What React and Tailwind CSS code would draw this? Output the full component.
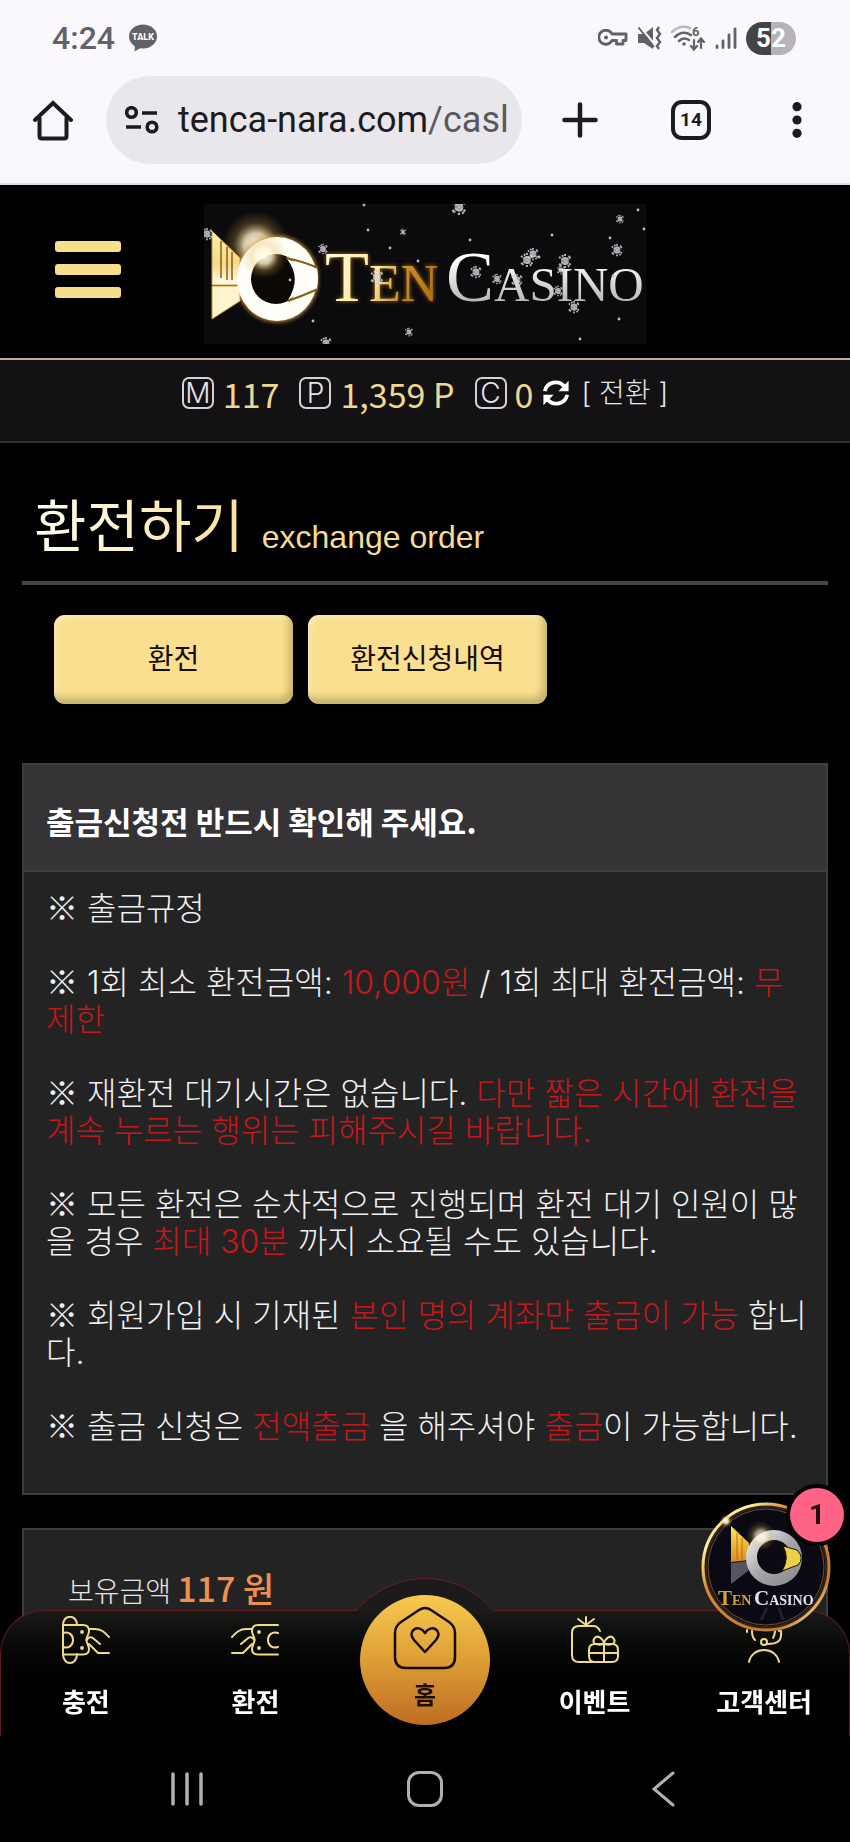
import React from "react";

const INK = "#1d1b20";
const GOLD = "#efdb8c";

function StatusBar() {
  return (
    <div className="flex h-[76px] items-center justify-between pr-[54px] pl-[52px] text-[#636165]">
      <div className="flex items-center gap-[14px]">
        <span className="text-[32px] leading-none font-medium">4:24</span>
        <svg width="28" height="28" viewBox="0 0 28 28" role="img" aria-label="TALK">
          <ellipse cx="14" cy="12.500" rx="14" ry="12" fill="currentColor" />
          <path d="M6 20 L5.500 27.500 L15 22 Z" fill="currentColor" />
          <text x="14" y="16" textAnchor="middle" fontSize="9" fontWeight="800" fontFamily="Roboto, sans-serif" fill="#fff">TALK</text>
        </svg>
      </div>
      <div className="flex items-center gap-[9px]">
        <svg width="30" height="18" viewBox="0 0 30 18" fill="none" stroke="currentColor" strokeWidth="2.800">
          <path d="M14 5 H28 V11.500 H25 V15 H18.500 V11.500 H14 A7 7 0 1 1 14 5 Z" strokeLinejoin="round" />
          <circle cx="8" cy="8.500" r="2" fill="currentColor" stroke="none" />
        </svg>
        <svg width="25" height="24" viewBox="0 0 25 24" fill="none" stroke="currentColor">
          <path d="M1 8 H7 L16 1 V23 L7 17 H1 Z" fill="currentColor" stroke="none" />
          <path d="M3.500 1 L18 19" stroke="#faf7fd" strokeWidth="2" />
          <path d="M1.500 1.500 L17 21" strokeWidth="2" />
          <path d="M22 1 l-2 3 3 4 -3 4 3 4 -3 4 2 3" strokeWidth="2.400" />
        </svg>
        <svg width="35" height="32" viewBox="0 -3 35 32" fill="none" stroke="currentColor" strokeLinecap="round">
          <path d="M1 7 C7 1 14 1 19 3" stroke="#b9b7bb" strokeWidth="2.500" />
          <path d="M4 12 C9 7 15 7 20 10 M8 16 C11 13 15 13 18 15" strokeWidth="2.500" />
          <circle cx="13" cy="19" r="1.800" fill="currentColor" stroke="none" />
          <path d="M23 15 V24 M20 21 L23 24.500 L26 21 M30 23 V14 M27 17 L30 13.500 L33 17" strokeWidth="2.200" />
          <text x="21" y="11" fontSize="13" fontWeight="700" fontFamily="Roboto, sans-serif" fill="currentColor" stroke="none">6</text>
        </svg>
        <svg width="22" height="22" viewBox="0 0 22 22" fill="none" stroke="currentColor" strokeWidth="2.800" strokeLinecap="round">
          <path d="M2 19 V20.500 M8 14 V20.500 M14 8 V20.500 M20 2 V20.500" />
        </svg>
        <span className="flex h-[33px] w-[50px] items-center justify-center rounded-full bg-linear-to-r from-[#454346] from-50% to-[#b6b4b8] to-50% text-[26px] leading-none font-bold text-white">
          52
        </span>
      </div>
    </div>
  );
}

function AddressBar() {
  return (
    <div className="flex items-center pb-[19px]">
      <button aria-label="Home" className="flex w-[106px] justify-center">
        <svg width="40" height="42" viewBox="0 0 40 42" fill="none" stroke={INK} strokeWidth="4" strokeLinecap="round" strokeLinejoin="round">
          <path d="M2 21 L20 4 L38 21" strokeLinejoin="miter" />
          <path d="M6.500 19 V37 Q6.500 39.500 9 39.500 H31 Q33.500 39.500 33.500 37 V19" />
        </svg>
      </button>
      <button className="flex h-[88px] min-w-0 flex-1 items-center gap-[19px] overflow-hidden rounded-full bg-[#e9e7ec] pl-[19px] text-[36px] whitespace-nowrap text-[#1d1b20]">
        <svg className="shrink-0" width="34" height="28" viewBox="0 0 34 28" fill="none" stroke={INK} strokeWidth="3.600">
          <circle cx="6.500" cy="6.500" r="4.800" />
          <path d="M17 7 H32 M1 21 H16" />
          <circle cx="27" cy="21" r="4.800" />
        </svg>
        <span>tenca-nara.com<span className="text-[#5a585d]">/casl</span></span>
      </button>
      <button aria-label="New tab" className="flex w-[116px] justify-center">
        <svg width="36" height="36" viewBox="0 0 36 36" stroke={INK} strokeWidth="4.500" strokeLinecap="round">
          <path d="M18 2.500 V33.500 M2.500 18 H33.500" />
        </svg>
      </button>
      <button aria-label="Tabs" className="flex w-[106px] justify-center">
        <span className="flex h-[40px] w-[40px] items-center justify-center rounded-[11px] border-4 border-[#1d1b20] text-[19px] font-bold text-[#1d1b20]">14</span>
      </button>
      <button aria-label="Menu" className="flex w-[106px] justify-center">
        <svg width="10" height="36" viewBox="0 0 10 36" fill={INK}>
          <circle cx="5" cy="4.700" r="4.600" />
          <circle cx="5" cy="18" r="4.600" />
          <circle cx="5" cy="31.300" r="4.600" />
        </svg>
      </button>
    </div>
  );
}

const FLAKES = [
  [3, 30, 7], [119, 45, 6], [173, 73, 8], [199, 28, 4], [122, 139, 7], [205, 128, 5],
  [255, 3, 9], [272, 68, 7], [293, 75, 6], [313, 76, 7], [323, 56, 8], [329, 50, 7],
  [361, 57, 8], [357, 66, 5], [354, 87, 6], [370, 103, 7], [413, 46, 7], [416, 15, 5],
];
const DOTS = [
  [160, 1], [164, 26], [186, 44], [214, 57], [109, 117], [86, 76], [266, 36], [348, 31],
  [335, 53], [434, 6], [440, 25], [406, 34], [409, 72], [415, 115], [376, 135],
];

function Flake({ x, y, r }) {
  return (
    <g transform={`translate(${x} ${y}) scale(${r / 8})`} stroke="#d0d0d4" strokeWidth="2" strokeDasharray="2 1" opacity="0.850">
      <path d="M0 -7 V7 M-6 -4 L6 4 M-6 4 L6 -4 M-3 -6 L4 6 M5 -5 L-5 5" />
      <circle r="4" fill="#d9d9dc" fillOpacity="0.700" stroke="none" />
    </g>
  );
}

function Logo() {
  return (
    <svg className="h-auto w-[442px]" viewBox="0 0 442 140" role="img" aria-label="Ten Casino">
      <defs>
        <linearGradient id="ten" gradientUnits="userSpaceOnUse" x1="120" x2="236" y1="50" y2="90">
          <stop offset="0" stopColor="#fffbe0" />
          <stop offset="0.450" stopColor="#ffe9a0" />
          <stop offset="0.700" stopColor="#c98a2b" />
          <stop offset="1" stopColor="#b06c0c" />
        </linearGradient>
        <linearGradient id="casino" x1="0" x2="0" y1="0" y2="1">
          <stop offset="0.300" stopColor="#ffffff" />
          <stop offset="1" stopColor="#9d9da2" />
        </linearGradient>
        <linearGradient id="wing" x1="0" x2="0" y1="0" y2="1">
          <stop offset="0" stopColor="#fff3a8" />
          <stop offset="0.600" stopColor="#f5d988" />
          <stop offset="1" stopColor="#fffdf0" />
        </linearGradient>
        <radialGradient id="flare">
          <stop offset="0" stopColor="#fffef8" />
          <stop offset="0.350" stopColor="#fff6d0" stopOpacity="0.800" />
          <stop offset="0.650" stopColor="#e0b860" stopOpacity="0.250" />
          <stop offset="1" stopColor="#d9962a" stopOpacity="0" />
        </radialGradient>
        <filter id="glow" x="-30%" y="-30%" width="160%" height="160%">
          <feGaussianBlur stdDeviation="2" />
        </filter>
      </defs>
      <rect width="442" height="140" fill="#0b0a0d" />
      <circle cx="52" cy="41" r="34" fill="url(#flare)" />
      <ellipse cx="73" cy="75" rx="41" ry="43" fill="#d0953a" filter="url(#glow)" />
      <path d="M8 27 L36 54 V81 H8 Z" fill="url(#wing)" stroke="#c99a3c" strokeWidth="1" />
      <path d="M8 82 H36 V97 L8 115 Z" fill="#fdf3cf" stroke="#c99a3c" strokeWidth="1" />
      <path d="M17 37 V74 M23 43 V76 M28 48 V76" stroke="#8a5f14" strokeWidth="1.500" />
      <ellipse cx="73" cy="75" rx="40" ry="42" fill="#fffef8" />
      <circle cx="72" cy="75" r="25" fill="#0c0905" />
      <path d="M83 55 Q98 74 84 96 Q100 86 113 85 Q115 74 113 64 Q98 61 83 55 Z" fill="#fffef8" />
      <path d="M82 54 Q98 57 114 64 M84 97 Q98 92 114 85" fill="none" stroke="#8a5a16" strokeWidth="2" />
      <circle cx="60" cy="52" r="23" fill="url(#flare)" />
      <g fontFamily="'Liberation Serif', serif" fontSize="72">
        <g fill="#b57a1e" filter="url(#glow)" aria-hidden="true">
          <text x="121" y="97">T<tspan fontSize="52">EN</tspan></text>
        </g>
        <text x="121" y="97" fill="url(#ten)">T<tspan fontSize="52">EN</tspan></text>
        <text x="242" y="97" fill="url(#casino)">C<tspan fontSize="49">ASINO</tspan></text>
      </g>
      {FLAKES.map(([x, y, r]) => <Flake key={`${x}-${y}`} x={x} y={y} r={r} />)}
      {DOTS.map(([x, y]) => <circle key={`${x}-${y}`} cx={x} cy={y} r="1.400" fill="#bdbdc2" />)}
    </svg>
  );
}

function SiteHeader() {
  return (
    <header>
      <div className="relative flex h-[173px] items-end justify-center pb-[14px]">
        <button aria-label="메뉴" className="absolute top-[56px] left-[55px] flex w-[66px] flex-col gap-[12px]">
          <span className="h-[11px] rounded-[3px] bg-[#f6de8a]" />
          <span className="h-[11px] rounded-[3px] bg-[#f6de8a]" />
          <span className="h-[11px] rounded-[3px] bg-[#f6de8a]" />
        </button>
        <Logo />
      </div>
      <div className="flex h-[85px] items-center justify-center border-t-2 border-b-2 border-t-[#c5a99a] border-b-[#343335] bg-[#131114] pb-[15px] whitespace-nowrap text-[34px] text-[#ecd98f]">
        <Badge letter="M" />
        <span className="mr-[20px] ml-[9px]">117</span>
        <Badge letter="P" />
        <span className="mr-[20px] ml-[9px]">1,359 P</span>
        <Badge letter="C" />
        <span className="ml-[8px]">0</span>
        <svg className="ml-[9px]" width="28" height="28" viewBox="0 0 30 30" fill="none" stroke="#fff" strokeWidth="4">
          <path d="M3 13 A12 12 0 0 1 24 8" />
          <path d="M27 17 A12 12 0 0 1 6 22" />
          <path d="M28.500 2 V13 H17.500 Z M1.500 28 V17 H12.500 Z" fill="#fff" stroke="none" />
        </svg>
        <button className="ml-[11px] font-['Inter','Noto_Sans_CJK_KR',sans-serif] text-[28px] font-light text-[#e6e5e8]">[ 전환 ]</button>
      </div>
    </header>
  );
}

function Badge({ letter }) {
  return (
    <span className="flex h-[32px] w-[32px] items-center justify-center rounded-[7px] border-2 border-[#d4d2d6] font-['Inter','Noto_Sans_CJK_KR',sans-serif] text-[28px] leading-none font-light text-[#e6e4e8]">
      {letter}
    </span>
  );
}

const goldButton =
  "h-[89px] w-[239px] rounded-[11px] bg-[#f9df8f] pb-[6px] text-[28px] text-[#140c06] shadow-[inset_-4px_-6px_7px_rgba(120,110,50,0.4),inset_3px_3px_5px_rgba(255,240,200,0.6)]";

function Red({ children }) {
  return <span className="text-[#c4181b]">{children}</span>;
}

function Mark() {
  return <span className="font-['Noto_Sans_CJK_KR',sans-serif] leading-none">※</span>;
}

function Notice() {
  return (
    <section className="border-2 border-[#3d3c3e] bg-[#242324]">
      <h2 className="flex h-[107px] items-center border-b-2 border-[#3f3e41] bg-[#353336] px-[22px] pt-[7px] text-[31px] font-bold text-white">
        출금신청전 반드시 확인해 주세요.
      </h2>
      <div className="flex flex-col gap-[37px] px-[22px] pt-[18px] pb-[48px] font-['Inter','Noto_Sans_CJK_KR',sans-serif] text-[32px] leading-[37px] font-light whitespace-nowrap text-[#f1f0f2]">
        <p><Mark /> 출금규정</p>
        <p><Mark /> 1회 최소 환전금액: <Red>10,000원</Red> / 1회 최대 환전금액: <Red>무<br />제한</Red></p>
        <p><Mark /> 재환전 대기시간은 없습니다. <Red>다만 짧은 시간에 환전을<br />계속 누르는 행위는 피해주시길 바랍니다.</Red></p>
        <p><Mark /> 모든 환전은 순차적으로 진행되며 환전 대기 인원이 많<br />을 경우 <Red>최대 30분</Red> 까지 소요될 수도 있습니다.</p>
        <p><Mark /> 회원가입 시 기재된 <Red>본인 명의 계좌만 출금이 가능</Red> 합니<br />다.</p>
        <p><Mark /> 출금 신청은 <Red>전액출금</Red> 을 해주셔야 <Red>출금</Red>이 가능합니다.</p>
      </div>
    </section>
  );
}

function NavIcon({ children }) {
  return (
    <svg width="48" height="48" viewBox="0 0 48 48" fill="none" stroke={GOLD} strokeWidth="2" strokeLinecap="round" strokeLinejoin="round">
      {children}
    </svg>
  );
}

function NavItem({ label, icon }) {
  return (
    <a href="#" className="flex flex-1 flex-col items-center gap-[18px] pt-[5px] text-[26px] leading-[38px] font-bold text-white">
      {icon}
      <span>{label}</span>
    </a>
  );
}

function BottomNav() {
  return (
    <nav className="relative flex h-[126px] rounded-t-[44px] border border-b-0 border-[#5e1c21] bg-linear-to-b from-[#191a18] to-black to-80%">
      <div className="absolute -top-[33px] left-1/2 h-[33px] w-[150px] -translate-x-1/2 overflow-hidden">
        <div className="-ml-[15px] h-[180px] w-[180px] rounded-full border border-[#6b1f25] bg-[#1b1b1b]" />
      </div>
      <div className="absolute -top-px left-1/2 h-[4px] w-[136px] -translate-x-1/2 bg-[#1a1b19]" />
      <NavItem
        label="충전"
        icon={
          <NavIcon>
            <path d="M1 9 V38 M1 9 C1 -2 15 -2 15 9 M1 38 C1 50 15 50 15 38" />
            <path d="M1 9 H21 Q27 9 27 15 C27 19 24.500 20 24.500 24 C24.500 28 27 29 27 33 Q27 38.500 21 38.500 H1" />
            <path d="M1 17 C7 15 11 19 11 24 C11 29 7 33 1 31" />
            <path d="M27 13 H33 C40 13 43 17 47 21 M38 28 L32 23 Q28 19 24.500 24 M47 37 H36 Q33 34 27 28" />
            <circle cx="20" cy="16" r="1.900" fill={GOLD} stroke="none" />
            <circle cx="20" cy="32" r="1.900" fill={GOLD} stroke="none" />
          </NavIcon>
        }
      />
      <NavItem
        label="환전"
        icon={
          <NavIcon>
            <path d="M47 9 H27 Q21 9 21 15 C21 19 23.500 20 23.500 24 C23.500 28 21 29 21 33 Q21 38.500 27 38.500 H47" />
            <path d="M47 17 C41 15 37 19 37 24 C37 29 41 33 47 31" />
            <path d="M21 13 H15 C8 13 5 17 1 21 M10 28 L16 23 Q20 19 23.500 24 M1 37 H12 Q15 34 21 28" />
            <circle cx="28" cy="16" r="1.900" fill={GOLD} stroke="none" />
            <circle cx="28" cy="32" r="1.900" fill={GOLD} stroke="none" />
          </NavIcon>
        }
      />
      <a href="#" className="relative flex flex-1 justify-center text-[24px] leading-[32px] font-bold text-[#1b0e04]">
        <span className="absolute -top-[16px] flex h-[130px] w-[130px] flex-col items-center rounded-full bg-linear-to-b from-[#f9c94f] via-[#dd9e36] to-[#bd6d22] pt-[11px]">
          <svg width="64" height="64" viewBox="0 0 64 64" fill="none" stroke="#140b04" strokeWidth="2.500" strokeLinejoin="round">
            <path d="M8 16 L26 4 Q32 0 38 4 L56 16 Q62 20 62 27 V51 Q62 62 51 62 H13 Q2 62 2 51 V27 Q2 20 8 16 Z" />
            <path d="M32 46 L21 34 C13 25 26 17 32 27 C38 17 51 25 43 34 Z" />
          </svg>
          <span className="mt-[8px]">홈</span>
        </span>
      </a>
      <NavItem
        label="이벤트"
        icon={
          <NavIcon>
            <path d="M29 15 Q27 10 22 10 H8 Q1 10 1 17 V39 Q1 46 8 46 H23" />
            <path d="M15 10 V1 M15 9 L7 3 M15 9 L23 3" />
            <path d="M24 28 H41 Q47 28 47 34 V40 Q47 46 41 46 H24 Q18 46 18 40 V34 Q18 28 24 28 Z M33 28 V46 M18 37 H47" />
            <path d="M33 28 C25 30 21 27 23 23 C26 18 32 22 33 28 C34 22 40 18 43 23 C45 27 41 30 33 28" />
          </NavIcon>
        }
      />
      <NavItem
        label="고객센터"
        icon={
          <NavIcon>
            <path d="M9 46 C12 30 36 30 39 46" />
            <path d="M12 15 Q12 21 15 24 M41 15 C42 25 38 28 27 28 M35 15 Q35 19 33 22" />
            <circle cx="24" cy="26" r="3" />
            <path d="M9 12 C9 -3 39 -3 39 12 V15 M7 14 V16" />
          </NavIcon>
        }
      />
    </nav>
  );
}

function ChatBubble() {
  return (
    <a href="#" aria-label="Ten Casino" className="fixed right-[19px] bottom-[210px] block h-[130px] w-[130px]">
      <svg width="130" height="130" viewBox="0 0 130 130">
        <defs>
          <linearGradient id="rim" x1="0" x2="1" y1="0" y2="1">
            <stop offset="0" stopColor="#d98a30" />
            <stop offset="0.180" stopColor="#fff2a0" />
            <stop offset="0.350" stopColor="#d98a30" />
            <stop offset="0.800" stopColor="#c87830" />
            <stop offset="0.900" stopColor="#ffe58a" />
            <stop offset="1" stopColor="#c8742a" />
          </linearGradient>
          <linearGradient id="ringSilver" x1="0" x2="1" y1="0" y2="1">
            <stop offset="0" stopColor="#ffffff" />
            <stop offset="0.500" stopColor="#a5a5a8" />
            <stop offset="1" stopColor="#88888b" />
          </linearGradient>
          <linearGradient id="wingSmall" x1="0" x2="0" y1="0" y2="1">
            <stop offset="0" stopColor="#ffe957" />
            <stop offset="1" stopColor="#e08a1e" />
          </linearGradient>
        </defs>
        <circle cx="65" cy="65" r="64" fill="#0b0a14" />
        <circle cx="65" cy="65" r="61" fill="none" stroke="#2c2420" strokeWidth="4" />
        <circle cx="65" cy="65" r="63" fill="none" stroke="url(#rim)" strokeWidth="3" />
        <circle cx="65" cy="65" r="58" fill="none" stroke="#7d4d26" strokeWidth="1" />
        <path d="M66 106 L60 118 M78 106 L82 118" stroke="#211f30" strokeWidth="3" />
        <path d="M30 24 L48 41 V58 L30 60 Z" fill="url(#wingSmall)" />
        <path d="M36 31 V58 M41 36 V57" stroke="#b06a14" strokeWidth="1" />
        <path d="M30 61 L47 59 V69 L30 82 Z" fill="#55555b" />
        <circle cx="73" cy="56" r="28" fill="url(#ringSilver)" />
        <circle cx="73" cy="55" r="17" fill="#0c0a12" />
        <path d="M82 44 L96 48 Q104 56 97 63 L81 69 Q89 56 82 44 Z" fill="#eed047" stroke="#17110a" strokeWidth="1" />
        <circle cx="60" cy="34" r="15" fill="url(#flare)" opacity="0.800" />
        <circle cx="25" cy="19" r="7" fill="url(#flare)" />
        <text x="17" y="103" fontFamily="'Liberation Serif', serif" fontWeight="700" fontSize="21" fill="#d2a431">T<tspan fontSize="14">EN</tspan></text>
        <text x="53" y="103" fontFamily="'Liberation Serif', serif" fontWeight="700" fontSize="21" fill="#e4e4e8">C<tspan fontSize="14">ASINO</tspan></text>
      </svg>
      <span className="absolute -top-[14px] -right-[13px] flex h-[54px] w-[54px] items-center justify-center rounded-full bg-[#ff6486] font-['Roboto',sans-serif] text-[28px] leading-none font-bold text-[#1a0c10] ring-4 ring-[#050306]">
        1
      </span>
    </a>
  );
}

function SystemNav() {
  return (
    <div className="flex h-[106px] items-center bg-black px-[68px]">
      <button aria-label="Recents" className="flex flex-1 justify-center">
        <svg width="34" height="36" viewBox="0 0 34 36" stroke="#b1afb3" strokeWidth="3.500" strokeLinecap="round">
          <path d="M3 3 V33 M17 3 V33 M31 3 V33" />
        </svg>
      </button>
      <button aria-label="Home screen" className="flex flex-1 justify-center">
        <span className="h-[36px] w-[36px] rounded-[12px] border-[3px] border-[#b1afb3]" />
      </button>
      <button aria-label="Back" className="flex flex-1 justify-center">
        <svg width="24" height="36" viewBox="0 0 24 36" fill="none" stroke="#b1afb3" strokeWidth="3" strokeLinecap="round">
          <path d="M22 2 L3 18 L22 34" />
        </svg>
      </button>
    </div>
  );
}

export default function App() {
  return (
    <div className="flex min-h-screen flex-col bg-[#010002] font-['Noto_Sans_CJK_KR',sans-serif]">
      <div className="border-b-2 border-[#dfdce2] bg-[#faf7fd] font-['Roboto','Noto_Sans_CJK_KR',sans-serif]">
        <StatusBar />
        <AddressBar />
      </div>
      <SiteHeader />
      <main className="flex flex-1 flex-col px-[22px]">
        <div className="flex h-[142px] items-end border-b-4 border-[#474548] pb-[18px] pl-[12px]">
          <h1 className="bg-linear-to-r from-[#fffdf0] to-[#f8e09a] bg-clip-text text-[57px] leading-[82px] text-transparent">환전하기</h1>
          <span className="ml-[18px] font-['Liberation_Sans',sans-serif] text-[32px] leading-[52px] text-[#f3dc97]">exchange order</span>
        </div>
        <div className="flex gap-[15px] px-[32px] pt-[30px] pb-[59px]">
          <button className={goldButton}>환전</button>
          <button className={goldButton}>환전신청내역</button>
        </div>
        <div className="flex flex-1 flex-col gap-[33px]">
          <Notice />
          <section className="min-h-[300px] flex-1 border-2 border-b-0 border-[#3d3c3e] bg-[#242324] px-[44px] pt-[33px]">
            <p className="text-[28px] leading-[50px] font-light text-[#e6e5e8]">
              보유금액 <span className="text-[34px] font-medium text-[#ee914c]">117 원</span>
            </p>
          </section>
        </div>
      </main>
      <div className="fixed inset-x-0 bottom-0">
        <BottomNav />
        <SystemNav />
      </div>
      <ChatBubble />
    </div>
  );
}
